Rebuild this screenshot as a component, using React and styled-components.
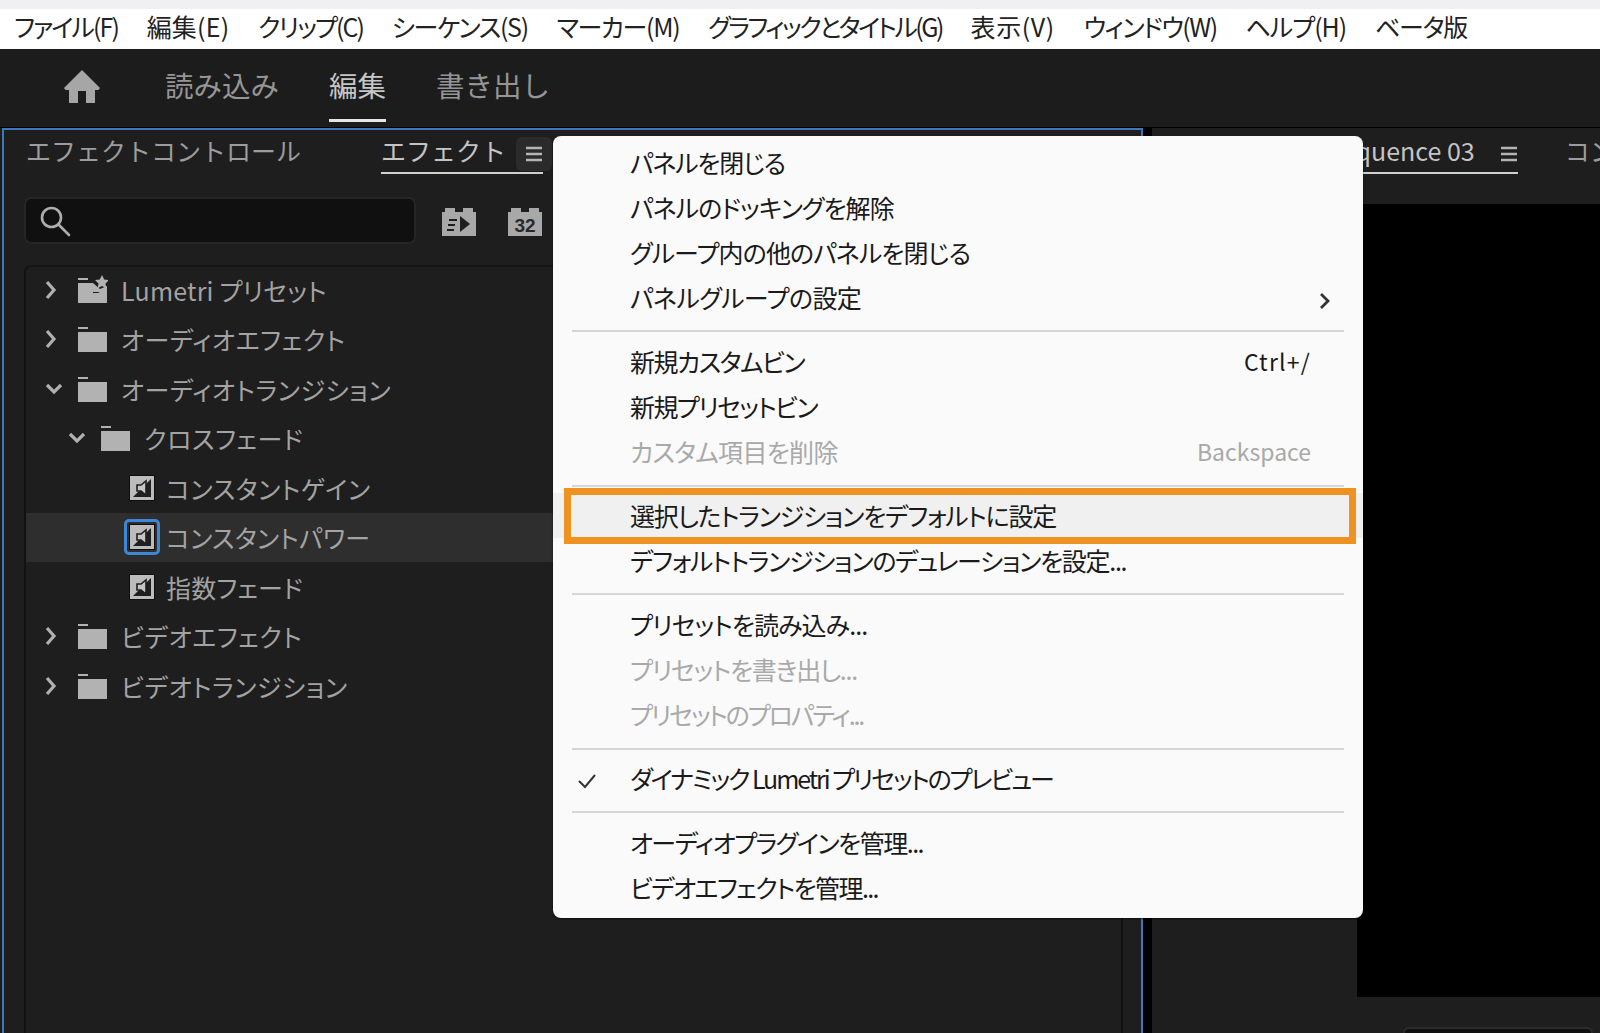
import React from 'react';
import styled, { createGlobalStyle } from 'styled-components';

const FONT = '"Noto Sans CJK JP", "Noto Sans", sans-serif';

const GlobalStyle = createGlobalStyle`
  html, body {
    margin: 0;
    padding: 0;
    height: 100%;
    overflow: hidden;
    background: #000;
  }
  body {
    font-family: ${FONT};
    font-feature-settings: "palt";
  }
  #root {
    height: 100%;
  }
`;

const Page = styled.div`
  position: relative;
  width: 1600px;
  height: 1033px;
  display: flex;
  flex-direction: column;
  overflow: hidden;
`;

const TopStrip = styled.div`
  height: 9px;
  flex: none;
  background: #f0f0f2;
`;

const MenuBar = styled.div`
  height: 40px;
  flex: none;
  background: #fff;
  display: flex;
  align-items: flex-start;
  gap: 28.7px;
  padding-left: 14px;
`;

const MenuBarItem = styled.span`
  font-size: 25px;
  line-height: 34px;
  letter-spacing: ${p => p.$spacing}px;
  color: #222;
  white-space: nowrap;
`;

const NavBar = styled.div`
  height: 78px;
  flex: none;
  background: #1c1c1c;
  display: flex;
  align-items: stretch;
  padding-left: 63px;
`;

const HomeIcon = styled.svg`
  width: 38px;
  height: 34px;
  flex: none;
  margin: 21px 64px 0 0;
  fill: #a6a6a6;
`;

const NavTab = styled.div`
  font-size: 28.5px;
  font-feature-settings: normal;
  margin-right: 50px;
  height: 73px;
  box-sizing: border-box;
  display: flex;
  align-items: center;
  padding-top: 1px;
  color: ${p => (p.$active ? '#c6c6c6' : '#959595')};
  border-bottom: 3px solid ${p => (p.$active ? '#e6e6e6' : 'transparent')};
`;

const Workspace = styled.div`
  flex: 1;
  min-height: 0;
  background: #000;
  display: flex;
  padding-top: 1px;
`;

const LeftGutter = styled.div`
  width: 2px;
  background: #1c1c1c;
  flex: none;
`;

const EffectsPanel = styled.section`
  width: 1141px;
  flex: none;
  box-sizing: border-box;
  background: #1e1e1e;
  border: 2px solid #3d78bd;
  border-bottom: 0;
  display: flex;
  flex-direction: column;
`;

const TabRow = styled.div`
  height: 48px;
  flex: none;
  display: flex;
  align-items: flex-start;
  padding-left: 22px;
`;

const PanelTab = styled.div`
  height: 44px;
  box-sizing: border-box;
  display: flex;
  align-items: center;
  padding-bottom: 2px;
  font-size: 25px;
  font-feature-settings: normal;
  white-space: nowrap;
  color: ${p => (p.$active ? '#c4c4c4' : '#9c9c9c')};
  margin-right: ${p => p.$gap || 0}px;
  border-bottom: 2px solid ${p => (p.$active ? '#d0d0d0' : 'transparent')};
`;

const MenuHandle = styled.div`
  width: ${p => (p.$boxed ? 36 : 18)}px;
  height: 34px;
  flex: none;
  margin: 8px ${p => (p.$boxed ? -9 : 0)}px 0 ${p => (p.$boxed ? 10 : 25)}px;
  display: flex;
  align-items: center;
  justify-content: center;
  border-radius: 6px;
  background: ${p => (p.$boxed ? '#2b2b2b' : 'transparent')};
`;

const HamburgerIcon = styled.svg`
  width: 18px;
  height: 16px;
  stroke: #b4b4b4;
  stroke-width: 2.4;
`;

const SearchRow = styled.div`
  height: 47px;
  flex: none;
  margin-top: 19px;
  padding-left: 20px;
  display: flex;
  align-items: center;
`;

const SearchBox = styled.div`
  width: 392px;
  height: 47px;
  box-sizing: border-box;
  background: #101010;
  border: 2px solid #262626;
  border-radius: 7px;
  display: flex;
  align-items: center;
  padding-left: 13px;
`;

const SearchIcon = styled.svg`
  width: 32px;
  height: 32px;
  fill: none;
  stroke: #adadad;
  stroke-width: 2.6;
  stroke-linecap: round;
`;

const BinIcon = styled.svg`
  width: 34px;
  height: 30px;
  margin-left: ${p => p.$left}px;
  fill: #a8a8a8;
`;

const BinLabel = styled.text`
  font-family: "Liberation Sans", sans-serif;
  font-size: 19px;
  font-weight: 700;
  fill: #2a2a2a;
`;

const TreePanel = styled.div`
  flex: 1;
  margin: 21px 18px 0 20px;
  border-left: 2px solid #121212;
  border-top: 2px solid #151515;
  border-right: 2px solid #121212;
  border-radius: 7px 7px 0 0;
`;

const TreeRow = styled.div`
  height: 49.5px;
  display: flex;
  align-items: center;
  padding-left: ${p => p.$indent}px;
  background: ${p => (p.$selected ? '#2e2e2e' : 'transparent')};

  &:first-child {
    margin-top: -2px;
  }
`;

const Twisty = styled.svg`
  width: 22px;
  height: 22px;
  flex: none;
  fill: none;
  stroke: #b0b0b0;
  stroke-width: 3.2;
`;

const FolderIcon = styled.svg`
  width: 32px;
  height: 30px;
  flex: none;
  margin-left: 12px;
  fill: #b2b2b2;
`;

const ClipIcon = styled.svg`
  width: 26px;
  height: 26px;
  flex: none;
  padding: 2px;
  border-radius: 2px;
  outline: ${p => (p.$selected ? '3px solid #3d86d8' : 'none')};
`;

const TreeLabel = styled.span`
  font-size: 25px;
  letter-spacing: ${p => p.$spacing ?? 0.6}px;
  color: #a3a3a3;
  white-space: nowrap;
  margin-left: ${p => p.$left}px;
`;

const PanelGap = styled.div`
  width: 9px;
  flex: none;
`;

const MonitorPanel = styled.section`
  flex: 1;
  min-width: 0;
  background: #1e1e1e;
  display: flex;
  flex-direction: column;
  overflow: hidden;
`;

const MonitorTabs = styled.div`
  height: 74px;
  flex: none;
  display: flex;
  align-items: flex-start;
  padding-top: 2px;
  padding-left: 38px;
`;

const MonitorBody = styled.div`
  flex: 1;
  min-height: 0;
  display: flex;
  flex-direction: column;
  align-items: flex-end;
`;

const Video = styled.div`
  width: 243px;
  height: 793px;
  flex: none;
  background: #000;
`;

const TimecodeBox = styled.div`
  width: 190px;
  height: 20px;
  margin: 30px 7px 0 0;
  box-sizing: border-box;
  background: #101010;
  border: 2px solid #2c2c2c;
  border-bottom: 0;
  border-radius: 7px 7px 0 0;
`;

const ContextMenu = styled.div`
  position: absolute;
  left: 553px;
  top: 136px;
  width: 810px;
  height: 782px;
  box-sizing: border-box;
  padding-top: 3px;
  background: #fafafa;
  border-radius: 8px;
  box-shadow: 0 1px 2px rgba(0, 0, 0, 0.6);
`;

const MenuRow = styled.div`
  position: relative;
  height: 45.2px;
  display: flex;
  align-items: center;
  justify-content: space-between;
  padding: 0 52px 0 77px;
  font-size: 25px;
  letter-spacing: ${p => p.$spacing ?? -0.9}px;
  white-space: nowrap;
  color: ${p => (p.$disabled ? '#a9a9a9' : '#1a1a1a')};
  background: ${p => (p.$marked ? '#f0f0f0' : 'transparent')};
`;

const Shortcut = styled.span`
  font-size: 23px;
  letter-spacing: ${p => p.$spacing}px;
`;

const OrangeMark = styled.div`
  position: absolute;
  left: 11px;
  right: 7px;
  top: -5px;
  bottom: -6px;
  border: 7px solid #ee9322;
`;

const CheckIcon = styled.svg`
  position: absolute;
  left: 23px;
  top: 15px;
  width: 22px;
  height: 20px;
  fill: none;
  stroke: #333;
  stroke-width: 2;
`;

const SubmenuIcon = styled.svg`
  position: absolute;
  right: 30px;
  top: 15px;
  width: 16px;
  height: 22px;
  fill: none;
  stroke: #333;
  stroke-width: 2.8;
`;

const Separator = styled.div`
  height: 2px;
  margin: 10.6px 19px 6px 19px;
  background: #d6d6d6;
`;

const Hamburger = () => (
  <HamburgerIcon viewBox="0 0 18 16">
    <path d="M1 2h16M1 8h16M1 14h16" />
  </HamburgerIcon>
);

const Folder = ({ star }) => (
  <FolderIcon viewBox="0 0 32 30">
    <rect x="2" y="3" width="10" height="2" />
    <rect x="2" y="8" width="29" height="20" />
    {star && (
      <>
        <path d="M17 2h15v13h-4l-6 3h-5z" fill="#1e1e1e" />
        <path d="M17 8h0l7 6 7-3v6H17z" />
        <path d="M26 0l2.2 4.4 4.8.7-3.5 3.4.8 4.8-4.3-2.3-4.3 2.3.8-4.8L19 5.1l4.8-.7z" />
      </>
    )}
  </FolderIcon>
);

const Clip = ({ selected }) => (
  <ClipIcon viewBox="0 0 26 26" $selected={selected}>
    <rect x="0.5" y="0.5" width="25" height="25" fill="#bcbcbc" stroke="#0e0e0e" />
    <path d="M4 22 L22 4 V22 Z" fill="#1f1f1f" />
    <path d="M8 10h4l5-4v14l-5-4H8z" fill="#c4c4c4" stroke="#1f1f1f" strokeWidth="1.6" />
  </ClipIcon>
);

const Chevron = ({ open }) => (
  <Twisty viewBox="0 0 22 22">
    {open ? <path d="M5 7l7 7 7-7" /> : <path d="M5 3l7 8-7 8" />}
  </Twisty>
);

const menuItems = [
  ['ファイル(F)', -1.9],
  ['編集(E)', 0.2],
  ['クリップ(C)', -1.9],
  ['シーケンス(S)', -1.3],
  ['マーカー(M)', -1.3],
  ['グラフィックとタイトル(G)', -2.5],
  ['表示(V)', 0.6],
  ['ウィンドウ(W)', -1.5],
  ['ヘルプ(H)', -1],
  ['ベータ版', -1.2],
];

const treeItems = [
  { label: 'Lumetri プリセット', kind: 'folder', level: 0, star: true, spacing: 0.2 },
  { label: 'オーディオエフェクト', kind: 'folder', level: 0 },
  { label: 'オーディオトランジション', kind: 'folder', level: 0, open: true },
  { label: 'クロスフェード', kind: 'folder', level: 1, open: true },
  { label: 'コンスタントゲイン', kind: 'clip' },
  { label: 'コンスタントパワー', kind: 'clip', selected: true, spacing: 0.3 },
  { label: '指数フェード', kind: 'clip', spacing: 0.2 },
  { label: 'ビデオエフェクト', kind: 'folder', level: 0 },
  { label: 'ビデオトランジション', kind: 'folder', level: 0 },
];

const contextGroups = [
  [
    { label: 'パネルを閉じる', spacing: -1.2 },
    { label: 'パネルのドッキングを解除', spacing: -0.95 },
    { label: 'グループ内の他のパネルを閉じる' },
    { label: 'パネルグループの設定', spacing: -0.6, submenu: true },
  ],
  [
    { label: '新規カスタムビン', spacing: -1.5, shortcut: 'Ctrl+/', shortcutSpacing: 1.2 },
    { label: '新規プリセットビン', spacing: -1.6 },
    { label: 'カスタム項目を削除', spacing: -0.7, shortcut: 'Backspace', shortcutSpacing: 0, disabled: true },
  ],
  [
    { label: '選択したトランジションをデフォルトに設定', spacing: -1.2, marked: true },
    { label: 'デフォルトトランジションのデュレーションを設定...', spacing: -1.3 },
  ],
  [
    { label: 'プリセットを読み込み...' },
    { label: 'プリセットを書き出し...', spacing: -1.25, disabled: true },
    { label: 'プリセットのプロパティ...', spacing: -2.1, disabled: true },
  ],
  [{ label: 'ダイナミック Lumetri プリセットのプレビュー', spacing: -2.1, checked: true }],
  [
    { label: 'オーディオプラグインを管理...', spacing: -1.5 },
    { label: 'ビデオエフェクトを管理...', spacing: -1.6 },
  ],
];

export default function App() {
  return (
    <Page>
      <GlobalStyle />
      <TopStrip />
      <MenuBar>
        {menuItems.map(([label, spacing]) => (
          <MenuBarItem key={label} $spacing={spacing}>{label}</MenuBarItem>
        ))}
      </MenuBar>
      <NavBar>
        <HomeIcon viewBox="0 0 38 34">
          <path d="M19 0L37 18l-1.5 2H32v13H23V21h-8v12H6V20H2.5L1 18z" />
        </HomeIcon>
        <NavTab>読み込み</NavTab>
        <NavTab $active>編集</NavTab>
        <NavTab>書き出し</NavTab>
      </NavBar>
      <Workspace>
        <LeftGutter />
        <EffectsPanel>
          <TabRow>
            <PanelTab $gap={80}>エフェクトコントロール</PanelTab>
            <PanelTab $active>
              エフェクト
              <MenuHandle $boxed><Hamburger /></MenuHandle>
            </PanelTab>
          </TabRow>
          <SearchRow>
            <SearchBox>
              <SearchIcon viewBox="0 0 32 32">
                <circle cx="12.5" cy="12.5" r="9.5" />
                <path d="M19.5 19.5L30 30" />
              </SearchIcon>
            </SearchBox>
            <BinIcon viewBox="0 0 34 30" $left={26}>
              <path d="M0 6h3V2h10v4h8V2h10v4h3v24H0z" />
              <path d="M7 13h8v2H7zM6 18h7v2H6zM5 23h7v2H5zM18 10l10 8-10 8z" fill="#1e1e1e" />
            </BinIcon>
            <BinIcon viewBox="0 0 34 30" $left={32}>
              <path d="M0 6h3V2h10v4h8V2h10v4h3v24H0z" />
              <BinLabel x="17" y="26" textAnchor="middle">32</BinLabel>
            </BinIcon>
          </SearchRow>
          <TreePanel>
            {treeItems.map(item => (
              item.kind === 'clip' ? (
                <TreeRow key={item.label} $indent={101} $selected={item.selected}>
                  <Clip selected={item.selected} />
                  <TreeLabel $left={9} $spacing={item.spacing}>{item.label}</TreeLabel>
                </TreeRow>
              ) : (
                <TreeRow key={item.label} $indent={item.level ? 39 : 16}>
                  <Chevron open={item.open} />
                  <Folder star={item.star} />
                  <TreeLabel $left={13} $spacing={item.spacing}>{item.label}</TreeLabel>
                </TreeRow>
              )
            ))}
          </TreePanel>
        </EffectsPanel>
        <PanelGap />
        <MonitorPanel>
          <MonitorTabs>
            <PanelTab $active $gap={47}>
              プログラム: Sequence 03
              <MenuHandle><Hamburger /></MenuHandle>
            </PanelTab>
            <PanelTab>コン</PanelTab>
          </MonitorTabs>
          <MonitorBody>
            <Video />
            <TimecodeBox />
          </MonitorBody>
        </MonitorPanel>
      </Workspace>
      <ContextMenu>
        {contextGroups.map((group, i) => (
          <React.Fragment key={i}>
            {i > 0 && <Separator />}
            {group.map(item => (
              <MenuRow key={item.label} $spacing={item.spacing} $disabled={item.disabled} $marked={item.marked}>
                {item.checked && (
                  <CheckIcon viewBox="0 0 22 20"><path d="M3 10l6 6L19 4" /></CheckIcon>
                )}
                <span>{item.label}</span>
                {item.shortcut && <Shortcut $spacing={item.shortcutSpacing}>{item.shortcut}</Shortcut>}
                {item.submenu && (
                  <SubmenuIcon viewBox="0 0 16 22"><path d="M4 4l7 7-7 7" /></SubmenuIcon>
                )}
                {item.marked && <OrangeMark />}
              </MenuRow>
            ))}
          </React.Fragment>
        ))}
      </ContextMenu>
    </Page>
  );
}
